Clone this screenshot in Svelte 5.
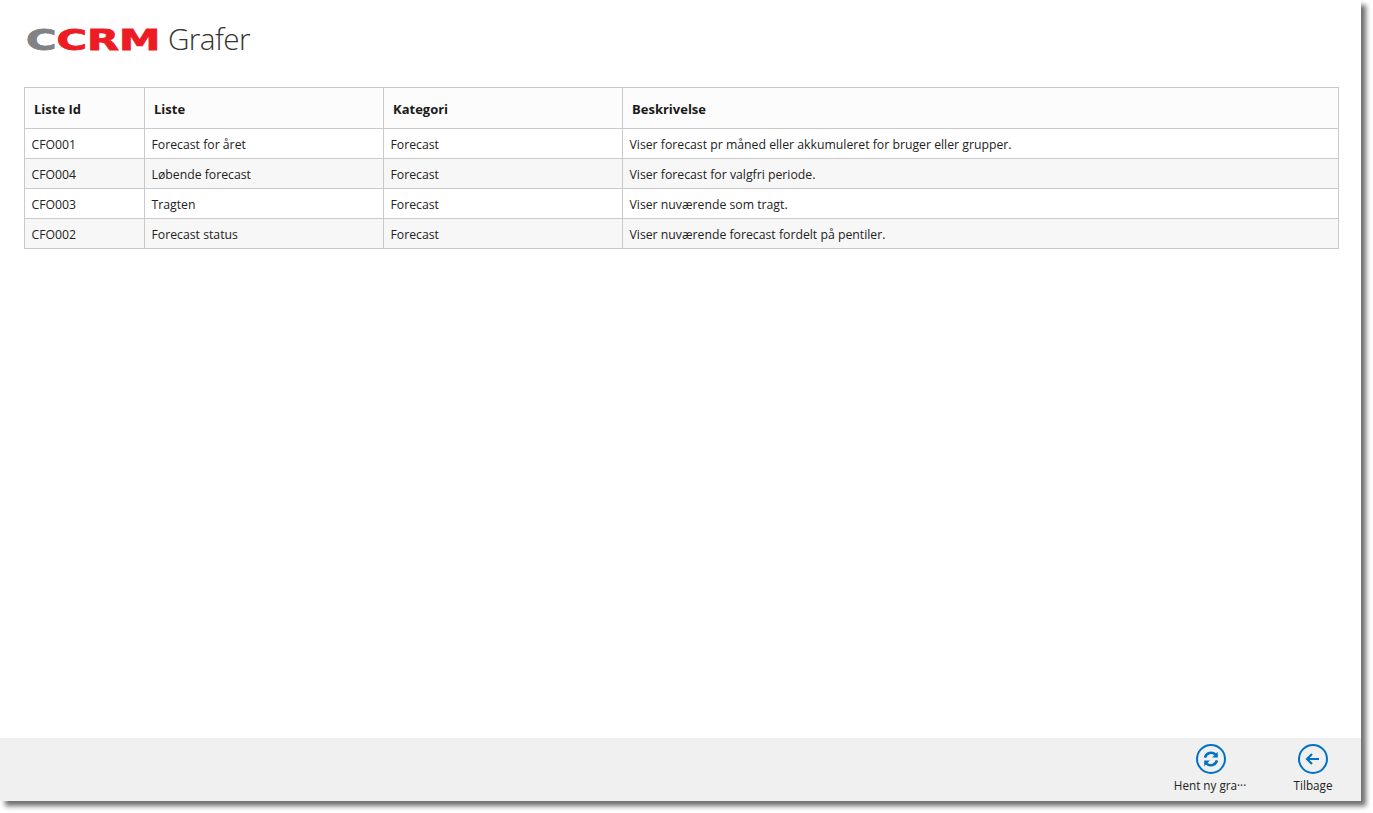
<script lang="ts">
  const columns = [
    { label: 'Liste Id', width: 120 },
    { label: 'Liste', width: 239 },
    { label: 'Kategori', width: 239 },
    { label: 'Beskrivelse', width: 716 }
  ];

  const rows = [
    ['CFO001', 'Forecast for året', 'Forecast', 'Viser forecast pr måned eller akkumuleret for bruger eller grupper.'],
    ['CFO004', 'Løbende forecast', 'Forecast', 'Viser forecast for valgfri periode.'],
    ['CFO003', 'Tragten', 'Forecast', 'Viser nuværende som tragt.'],
    ['CFO002', 'Forecast status', 'Forecast', 'Viser nuværende forecast fordelt på pentiler.']
  ];
</script>

<div class="window">
  <header class="page-header">
    <div class="logo"><span class="logo-grey">C</span><span class="logo-red">CRM</span></div>
    <h1>Grafer</h1>
  </header>

  <main class="content">
    <table>
      <colgroup>
        {#each columns as col}
          <col style={`width:${col.width}px`} />
        {/each}
      </colgroup>
      <thead>
        <tr>
          {#each columns as col}
            <th>{col.label}</th>
          {/each}
        </tr>
      </thead>
      <tbody>
        {#each rows as row}
          <tr>
            {#each row as cell}
              <td>{cell}</td>
            {/each}
          </tr>
        {/each}
      </tbody>
    </table>
  </main>

  <footer class="app-bar">
    <button class="bar-btn">
      <span class="bar-icon">
        <svg viewBox="-1 0 32 32" width="32" height="32" fill="none">
          <circle cx="16" cy="16" r="14" stroke="#0072c6" stroke-width="2" />
          <path d="M10 14.600a6.300 6.300 0 0 1 10.600-3" stroke="#0072c6" stroke-width="2.600" />
          <path d="M22.800 8.800v5.700h-5.700z" fill="#0072c6" />
          <path d="M22 17.400a6.300 6.300 0 0 1-10.600 3" stroke="#0072c6" stroke-width="2.600" />
          <path d="M9.200 23.200v-5.700h5.700z" fill="#0072c6" />
        </svg>
      </span>
      <span class="bar-label">Hent ny gra···</span>
    </button>
    <button class="bar-btn">
      <span class="bar-icon">
        <svg viewBox="0 0 32 32" width="32" height="32" fill="none">
          <circle cx="16" cy="16" r="14" stroke="#0072c6" stroke-width="2" />
          <path d="M22 16H10M15 11l-5 5 5 5" stroke="#0072c6" stroke-width="2.200" />
        </svg>
      </span>
      <span class="bar-label">Tilbage</span>
    </button>
  </footer>
</div>

<style>
  :global(body) {
    margin: 0;
    min-height: 813px;
    background: #fff;
  }

  .window {
    width: 1361px;
    height: 801px;
    display: flex;
    flex-direction: column;
    background: #fff;
    box-shadow: 5px 5px 5px #6f6f6f;
    font-family: "Open Sans", "Noto Sans", sans-serif;
    color: #222;
  }

  .page-header {
    height: 87px;
    box-sizing: border-box;
    padding: 20px 0 0 26px;
    display: flex;
    align-items: flex-start;
    gap: 8px;
  }

  .logo {
    margin-top: 6px;
    width: 134px;
    height: 30px;
    line-height: 30px;
    font-family: "DejaVu Sans", sans-serif;
    font-weight: 700;
    font-size: 28.500px;
    white-space: nowrap;
    transform: scaleX(1.46);
    transform-origin: left center;
    -webkit-text-stroke: 0.8px currentColor;
  }

  .logo-grey {
    color: #808285;
  }

  .logo-red {
    color: #ed1c24;
  }

  h1 {
    margin: 0;
    font-size: 29.700px;
    line-height: 38px;
    font-weight: 300;
    color: #333;
    letter-spacing: -0.6px;
  }

  .content {
    flex: 1;
    padding: 0 0 0 24px;
  }

  table {
    table-layout: fixed;
    border-collapse: collapse;
    width: 1314px;
    font-size: 12.250px;
  }

  th,
  td {
    box-sizing: border-box;
    border: 1px solid #cacaca;
    text-align: left;
    white-space: nowrap;
    overflow: hidden;
  }

  th {
    height: 41px;
    padding: 2px 0 0 9px;
    background: #fcfcfc;
    font-size: 13px;
    font-weight: 700;
    color: #1a1a1a;
  }

  td {
    height: 30px;
    padding: 1px 0 0 6.500px;
  }

  tbody tr:nth-child(even) td {
    background: #f7f7f7;
  }

  .app-bar {
    height: 63px;
    flex: none;
    background: #f0f0f0;
    display: flex;
    justify-content: flex-end;
    gap: 7px;
  }

  .bar-btn {
    width: 96px;
    border: 0;
    padding: 5px 0 0;
    background: none;
    display: flex;
    flex-direction: column;
    align-items: center;
    font: inherit;
    color: #222;
  }

  .bar-icon {
    display: block;
    width: 32px;
    height: 32px;
  }

  .bar-label {
    margin-top: 1px;
    font-size: 11.700px;
    line-height: 18px;
  }
</style>
